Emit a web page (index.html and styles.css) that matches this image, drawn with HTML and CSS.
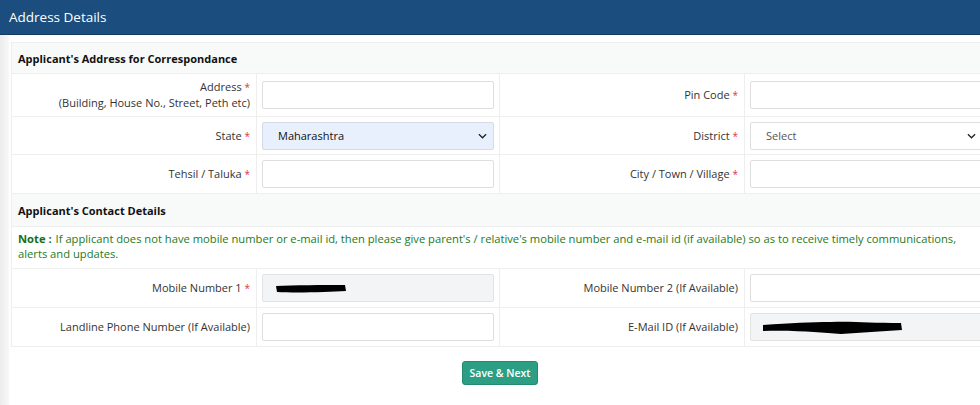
FILE: index.html
```html
<!DOCTYPE html>
<html>
<head>
<meta charset="utf-8">
<link rel="stylesheet" href="styles.css">
</head>
<body>
<div class="panel-head">Address Details</div>
<div class="page">
  <div class="content">
    <table class="form">
      <colgroup><col class="c1"><col class="c2"><col class="c3"><col class="c4"></colgroup>
      <tr class="section s1"><td colspan="4">Applicant's Address for Correspondance</td></tr>
      <tr class="row-tall">
        <td class="lbl">Address <span class="req">*</span><br>(Building, House No., Street, Peth etc)</td>
        <td class="fld"><div class="input"></div></td>
        <td class="lbl">Pin Code <span class="req">*</span></td>
        <td class="fld"><div class="input"></div></td>
      </tr>
      <tr class="row r38">
        <td class="lbl">State <span class="req">*</span></td>
        <td class="fld"><div class="input select filled"><span>Maharashtra</span><svg class="chev" viewBox="0 0 10 6" width="9" height="6"><path d="M1 1l4 4 4-4" fill="none" stroke="#222" stroke-width="1.4"/></svg></div></td>
        <td class="lbl">District <span class="req">*</span></td>
        <td class="fld"><div class="input select"><span class="ph">Select</span><svg class="chev" viewBox="0 0 10 6" width="9" height="6"><path d="M1 1l4 4 4-4" fill="none" stroke="#222" stroke-width="1.4"/></svg></div></td>
      </tr>
      <tr class="row r39">
        <td class="lbl">Tehsil / Taluka <span class="req">*</span></td>
        <td class="fld"><div class="input"></div></td>
        <td class="lbl">City / Town / Village <span class="req">*</span></td>
        <td class="fld"><div class="input"></div></td>
      </tr>
      <tr class="section s2"><td colspan="4">Applicant's Contact Details</td></tr>
      <tr class="note-row"><td colspan="4"><b class="note-tag">Note :</b><span class="note-text">If applicant does not have mobile number or e-mail id, then please give parent's / relative's mobile number and e-mail id (if available) so as to receive timely communications, alerts and updates.</span></td></tr>
      <tr class="row r39">
        <td class="lbl">Mobile Number 1 <span class="req">*</span></td>
        <td class="fld"><div class="input ro"><svg class="scrib" width="80" height="14" viewBox="0 0 80 14"><path d="M3 4 C20 3 50 3 72 3 L73 9 C55 10 25 11 4 10 Z" fill="#000"/></svg></div></td>
        <td class="lbl">Mobile Number 2 (If Available)</td>
        <td class="fld"><div class="input"></div></td>
      </tr>
      <tr class="row r39">
        <td class="lbl">Landline Phone Number (If Available)</td>
        <td class="fld"><div class="input"></div></td>
        <td class="lbl">E-Mail ID (If Available)</td>
        <td class="fld"><div class="input ro"><svg class="scrib2" width="150" height="20" viewBox="0 0 150 20"><path d="M2 6 C30 4 50 3 70 3 C90 2 110 4 140 4 L141 11 C120 12 100 14 80 15 C60 14 40 11 2 12 Z" fill="#000"/></svg></div></td>
      </tr>
    </table>
    <div class="actions"><button class="btn">Save &amp; Next</button></div>
  </div>
</div>
</body>
</html>
```
FILE: styles.css
```css
html, body {
  margin: 0;
  padding: 0;
  background: #ffffff;
  overflow: hidden;
  font-family: "Open Sans", "Liberation Sans", sans-serif;
  color: #333;
}
.panel-head {
  height: 34px;
  background: #1b4e7e;
  border-bottom: 1px solid #123c63;
  color: #fff;
  font-size: 13.5px;
  line-height: 34px;
  padding-left: 9px;
  width: 1000px;
}
.page {
  background: linear-gradient(to right, #ececec 0, #f6f6f6 8px, #fff 10px);
  padding-left: 10px;
  height: 370px;
}
.content {
  width: 978px;
  padding-top: 7px;
  background: #fff;
  margin-left: 1px;
}
.form {
  border-collapse: collapse;
  width: 977px;
  table-layout: fixed;
  font-size: 11px;
}
.c1 { width: 245px; }
.c2 { width: 243px; }
.c3 { width: 245px; }
.c4 { width: 244px; }
.form td {
  border: 1px solid #eeeeee;
  padding: 0 5px;
  vertical-align: middle;
}
.s1 { height: 31px; }
.s2 { height: 33px; }
.row-tall { height: 43px; }
.r38 { height: 38px; }
.r39 { height: 39px; }
.section td {
  background: #f8f9f9;
  font-weight: 700;
  color: #111;
  padding: 0 6px;
}
.lbl {
  text-align: right;
  color: #333;
  padding-right: 6px !important;
  line-height: 16px;
}
.req { color: #dc3545; font-size: 10px; }
.input {
  height: 26px;
  border: 1px solid #dedede;
  border-radius: 2px;
  background: #fff;
  display: flex;
  align-items: center;
}
.select { padding: 0 6px 0 15px; justify-content: space-between; }
.select span { color: #111; font-size: 11px; }
.select .ph { color: #555; }
.filled { background: #e8f0fe; border-color: #d5dbe6; }
.ro { background: #f3f4f6; border-color: #e3e3e3; padding-left: 10px; }
.scrib { margin-top: 2px; }
.scrib2 { margin-top: 4px; }
.note-row { height: 42px; }
.note-row td {
  color: #1c7a1c;
  font-size: 11.2px;
  line-height: 15px;
  padding: 0 6px 4px;
}
.note-tag { color: #157015; margin-right: 4px; }
.actions {
  display: flex;
  justify-content: center;
  padding-top: 14px;
}
.btn {
  background: #2b9e84;
  border: 1px solid #238a72;
  border-radius: 3px;
  color: #fff;
  font-family: "Open Sans", "Liberation Sans", sans-serif;
  font-weight: 600;
  font-size: 10.5px;
  height: 24px;
  padding: 0 7px;
}
```
